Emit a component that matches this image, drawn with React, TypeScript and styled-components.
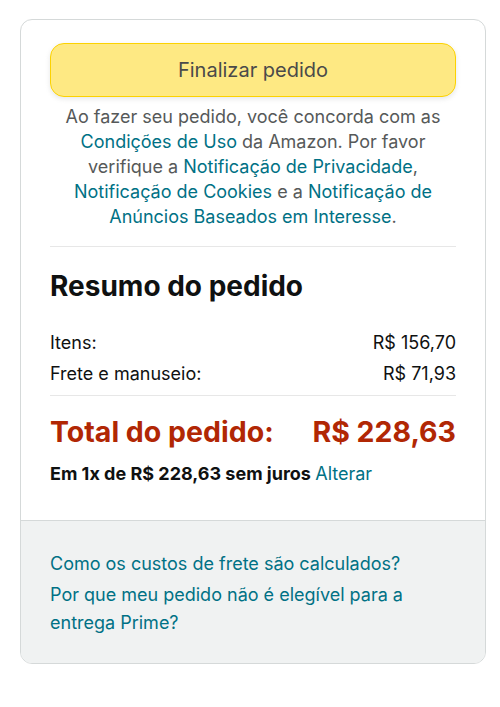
import React from "react";
import styled, { createGlobalStyle } from "styled-components";

const Global = createGlobalStyle`
  html, body { margin: 0; padding: 0; background: #ffffff; }
  body { font-family: Inter, "Noto Sans", sans-serif; color: #0f1111; }
`;

const Page = styled.div`
  padding: 19px 14px 0 20px;
`;

const Card = styled.div`
  width: 464px;
  border: 1px solid #d5d9d9;
  border-radius: 12px;
  overflow: hidden;
  background: #ffffff;
`;

const Top = styled.div`
  padding: 23px 29px 34px 29px;
  display: flex;
  flex-direction: column;
`;

const PlaceButton = styled.button`
  height: 54px;
  width: 100%;
  border: 1px solid #fcd200;
  border-radius: 14px;
  background: #fee983;
  box-shadow: 0 2px 5px rgba(213, 217, 217, 0.6);
  font-family: inherit;
  font-size: 20px;
  color: #4a4a4a;
  cursor: pointer;
`;

const Legal = styled.p`
  margin: 7px 0 0 0;
  padding-bottom: 17px;
  border-bottom: 1px solid #e7e7e7;
  text-align: center;
  font-size: 18px;
  line-height: 25px;
  color: #565959;
`;

const Link = styled.a`
  color: #007185;
  text-decoration: none;
`;

const Title = styled.h2`
  margin: 22px 0 24px 0;
  font-size: 28px;
  line-height: 34px;
  font-weight: 700;
  color: #0f1111;
`;

const Row = styled.div`
  display: flex;
  justify-content: space-between;
  font-size: 18px;
  line-height: 31px;
  color: #0f1111;
`;

const Divider = styled.div`
  height: 1px;
  background: #e7e7e7;
  margin: 6px 0 19px 0;
`;

const TotalRow = styled.div`
  display: flex;
  justify-content: space-between;
  font-size: 28.5px;
  line-height: 34px;
  font-weight: 700;
  color: #b12704;
`;

const Installment = styled.div`
  margin-top: 13px;
  font-size: 18px;
  line-height: 24px;
  font-weight: 700;
  color: #0f1111;
`;

const Plain = styled.span`
  font-weight: 400;
`;

const Footer = styled.div`
  background: #f0f2f2;
  border-top: 1px solid #d5d9d9;
  padding: 29px 29px 26px 29px;
  display: flex;
  flex-direction: column;
  gap: 3px;
  font-size: 18px;
  line-height: 28px;
`;

export default function App() {
  return (
    <>
      <Global />
      <Page>
        <Card>
          <Top>
            <PlaceButton>Finalizar pedido</PlaceButton>
            <Legal>
              Ao fazer seu pedido, você concorda com as{" "}
              <Link href="#">Condições de Uso</Link> da Amazon. Por favor
              verifique a <Link href="#">Notificação de Privacidade</Link>,{" "}
              <Link href="#">Notificação de Cookies</Link> e a{" "}
              <Link href="#">Notificação de Anúncios Baseados em Interesse</Link>.
            </Legal>
            <Title>Resumo do pedido</Title>
            <Row>
              <span>Itens:</span>
              <span>R$ 156,70</span>
            </Row>
            <Row>
              <span>Frete e manuseio:</span>
              <span>R$ 71,93</span>
            </Row>
            <Divider />
            <TotalRow>
              <span>Total do pedido:</span>
              <span>R$ 228,63</span>
            </TotalRow>
            <Installment>
              Em 1x de R$ 228,63 sem juros <Plain><Link href="#">Alterar</Link></Plain>
            </Installment>
          </Top>
          <Footer>
            <Link href="#">Como os custos de frete são calculados?</Link>
            <Link href="#">Por que meu pedido não é elegível para a entrega Prime?</Link>
          </Footer>
        </Card>
      </Page>
    </>
  );
}
